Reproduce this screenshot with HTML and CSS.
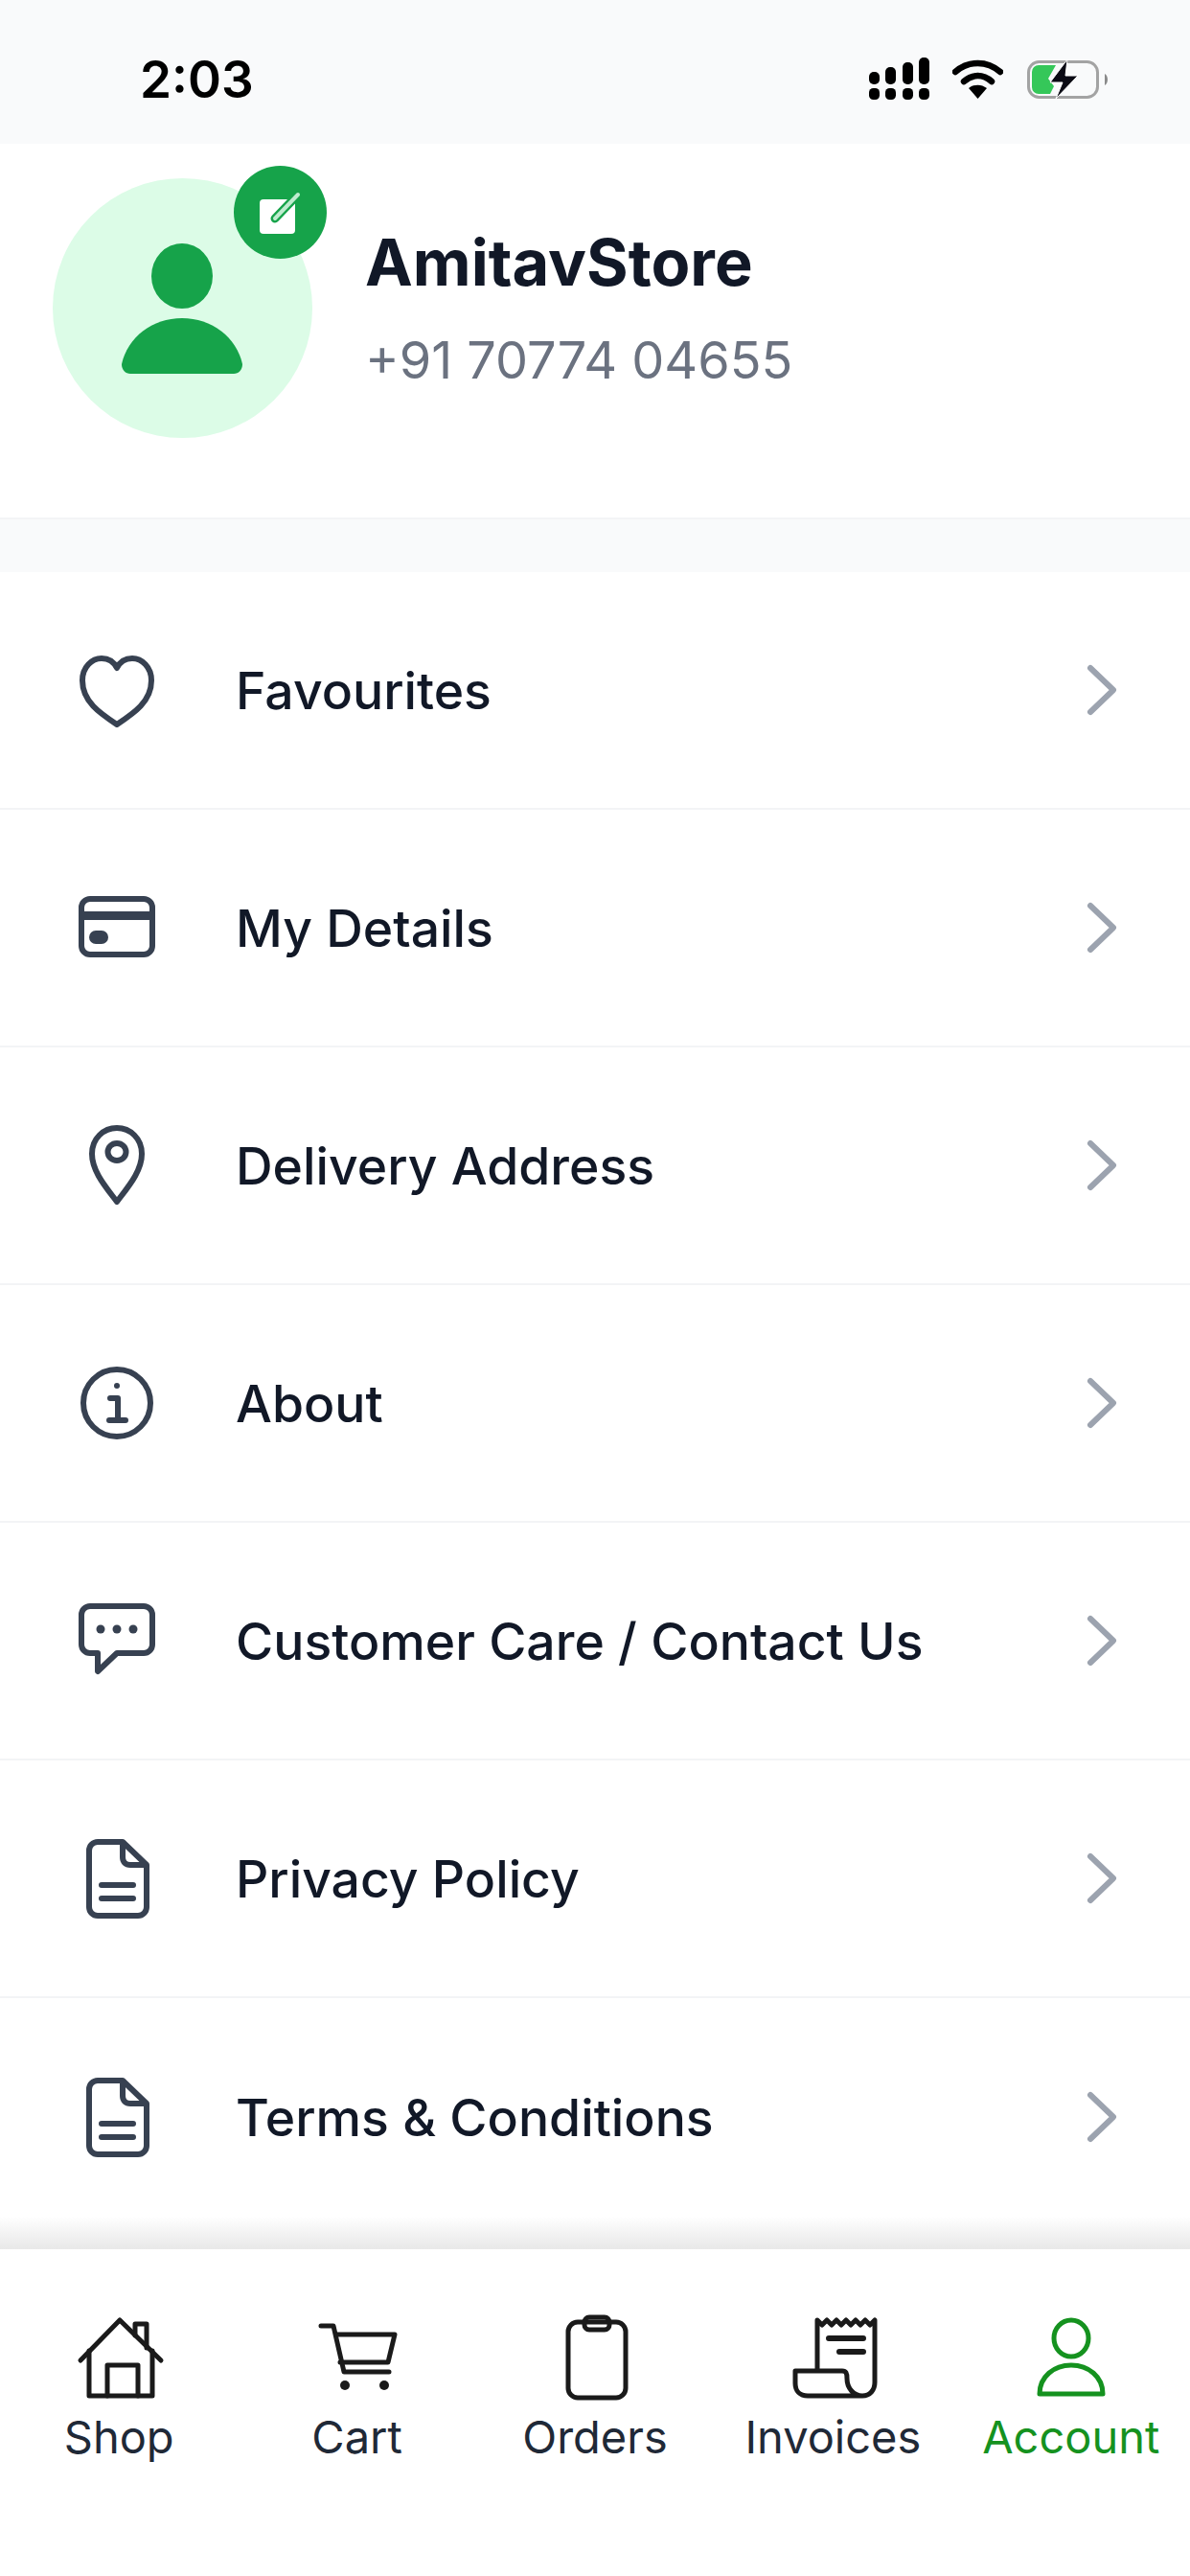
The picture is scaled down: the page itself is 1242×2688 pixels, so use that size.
FILE: index.html
```html
<!DOCTYPE html>
<html lang="en">
<head>
<meta charset="utf-8">
<title>Account</title>
<link rel="stylesheet" href="styles.css">
</head>
<body>
<div class="page">
  <header class="status">
    <span class="time">2:03</span>
    <div class="status-icons">
      <svg class="sig" width="63" height="44" viewBox="0 0 63 44" fill="#000">
        <rect x="0" y="32" width="11" height="12" rx="4.5"/><rect x="17" y="32" width="11" height="12" rx="4.5"/><rect x="35" y="32" width="11" height="12" rx="4.5"/><rect x="52" y="32" width="11" height="12" rx="4.5"/>
        <rect x="0" y="15" width="11" height="13" rx="5"/><rect x="17" y="10" width="11" height="18" rx="5"/><rect x="35" y="5" width="11" height="23" rx="5"/><rect x="52" y="0" width="11" height="28" rx="5"/>
      </svg>
      <svg class="wifi" width="53" height="41" viewBox="0 0 53 41">
        <path d="M3 13 C17 1 36 1 50 13" fill="none" stroke="#000" stroke-width="6.5" stroke-linecap="round"/>
        <path d="M12 23 C21 15 32 15 41 23" fill="none" stroke="#000" stroke-width="6.5" stroke-linecap="round"/>
        <path d="M17 30 C23 25.500 30 25.500 36 30 L26.500 41 Z" fill="#000"/>
      </svg>
      <svg class="batt" width="86" height="42" viewBox="0 0 86 42">
        <rect x="1.500" y="2.500" width="72" height="37" rx="11" fill="none" stroke="#a3a3a3" stroke-width="3"/>
        <path d="M5 13 a7 7 0 0 1 7 -7 H30 L22 20 L28 28 L24 36 H12 a7 7 0 0 1 -7 -7 Z" fill="#35c759"/>
        <path d="M42 0 L24 24 H37 L30 41 L53 17 H40 Z" fill="#0a0a14" stroke="#fff" stroke-width="1"/>
        <path d="M81 15 C85 17 85 25 81 27 Z" fill="#8a8a8a"/>
      </svg>
    </div>
  </header>

  <section class="profile">
    <div class="avatar">
      <svg class="avatar-person" width="126" height="136" viewBox="0 0 126 136" fill="#16a34a">
        <ellipse cx="63" cy="34" rx="32" ry="34"/>
        <path d="M0 126 C6 98 32 78 63 78 C94 78 120 98 126 126 C126 132 122 136 117 136 H9 C4 136 0 132 0 126 Z"/>
      </svg>
      <div class="badge">
        <svg width="44" height="44" viewBox="0 0 44 44">
          <rect x="0" y="8" width="37" height="36" rx="4" fill="#fff"/>
          <path d="M16 28 L40 3" stroke="#16a34a" stroke-width="9" stroke-linecap="round"/>
          <path d="M16 28 L40 3" stroke="#bfeccf" stroke-width="4" stroke-linecap="round"/>
        </svg>
      </div>
    </div>
    <div class="info">
      <h1 class="name">AmitavStore</h1>
      <p class="phone">+91 70774 04655</p>
    </div>
  </section>

  <div class="spacer"></div>

  <main class="menu">
    <a class="row">
      <svg class="ico" viewBox="0 0 96 96"><path d="M48 84 C30 72 12 60 12 38 C12 24 22 15 32 15 C40 15 45 19 48 25 C51 19 56 15 64 15 C74 15 84 24 84 38 C84 60 66 72 48 84 Z"/></svg>
      <span class="label">Favourites</span>
      <svg class="chev" viewBox="0 0 36 56"><path d="M6 5 L30 28 L6 51"/></svg>
    </a>
    <a class="row">
      <svg class="ico" viewBox="0 0 96 96"><rect x="11" y="18" width="74" height="58" rx="9"/><path class="band" d="M11 35.500 H85"/><rect x="19" y="51" width="20" height="14" rx="7" class="solid"/></svg>
      <span class="label">My Details</span>
      <svg class="chev" viewBox="0 0 36 56"><path d="M6 5 L30 28 L6 51"/></svg>
    </a>
    <a class="row">
      <svg class="ico" viewBox="0 0 96 96"><path d="M48 86 C36 70 22 54 22 36 C22 20 34 9 48 9 C62 9 74 20 74 36 C74 54 60 70 48 86 Z"/><ellipse cx="48" cy="34" rx="9.500" ry="9"/></svg>
      <span class="label">Delivery Address</span>
      <svg class="chev" viewBox="0 0 36 56"><path d="M6 5 L30 28 L6 51"/></svg>
    </a>
    <a class="row">
      <svg class="ico" viewBox="0 0 96 96"><circle cx="48" cy="48" r="35"/><path d="M41 43 H49 V66 M40 66 H57"/><circle cx="48" cy="30" r="3" class="solid"/></svg>
      <span class="label">About</span>
      <svg class="chev" viewBox="0 0 36 56"><path d="M6 5 L30 28 L6 51"/></svg>
    </a>
    <a class="row">
      <svg class="ico" viewBox="0 0 96 96"><path d="M20 12 H76 C81 12 85 16 85 21 V52 C85 57 81 61 76 61 H48 L28 80 V61 H20 C15 61 11 57 11 52 V21 C11 16 15 12 20 12 Z"/><circle cx="31" cy="36" r="4.500" class="solid"/><circle cx="48" cy="36" r="4.500" class="solid"/><circle cx="65" cy="36" r="4.500" class="solid"/></svg>
      <span class="label">Customer Care / Contact Us</span>
      <svg class="chev" viewBox="0 0 36 56"><path d="M6 5 L30 28 L6 51"/></svg>
    </a>
    <a class="row">
      <svg class="ico" viewBox="0 0 96 96"><path d="M28 10 H54 L79 34 V78 C79 83 75 87 70 87 H28 C23 87 19 83 19 78 V19 C19 14 23 10 28 10 Z"/><path d="M54 11 V26 C54 31 57 34 62 34 H78"/><path d="M32 55 H65 M32 69 H65"/></svg>
      <span class="label">Privacy Policy</span>
      <svg class="chev" viewBox="0 0 36 56"><path d="M6 5 L30 28 L6 51"/></svg>
    </a>
    <a class="row">
      <svg class="ico" viewBox="0 0 96 96"><path d="M28 10 H54 L79 34 V78 C79 83 75 87 70 87 H28 C23 87 19 83 19 78 V19 C19 14 23 10 28 10 Z"/><path d="M54 11 V26 C54 31 57 34 62 34 H78"/><path d="M32 55 H65 M32 69 H65"/></svg>
      <span class="label">Terms &amp; Conditions</span>
      <svg class="chev" viewBox="0 0 36 56"><path d="M6 5 L30 28 L6 51"/></svg>
    </a>
  </main>

  <nav class="tabs">
    <a class="tab">
      <svg class="tab-ico" viewBox="0 0 96 96"><path d="M8 51 L49 9 L92 51"/><path d="M65 25 V13 H77 V38"/><path d="M17 41 V88 H83 V41"/><path d="M36 88 V56 H68 V88"/></svg>
      <span>Shop</span>
    </a>
    <a class="tab">
      <svg class="tab-ico" viewBox="0 0 96 96"><path d="M10 15 H23 L34 63 H81"/><path d="M26 24 H87 L80 53 H30"/><circle cx="35" cy="77" r="5" class="fill"/><circle cx="76" cy="77" r="5" class="fill"/></svg>
      <span>Cart</span>
    </a>
    <a class="tab">
      <svg class="tab-ico" viewBox="0 0 96 96"><rect x="20" y="11" width="60" height="79" rx="10"/><rect x="37" y="6" width="26" height="13" rx="5"/></svg>
      <span>Orders</span>
    </a>
    <a class="tab">
      <svg class="tab-ico" viewBox="0 0 96 96"><path d="M32 61 V9 L37 14 L42 9 L47 14 L52 9 L57 14 L62 9 L67 14 L72 9 L77 14 L82 9 L87 14 L92 9 V74 C92 82 87 88 79 88 H22 C14 88 9 83 9 75 V62 H58 C62 62 63 64 63 70 C63 80 70 88 79 88"/><path d="M44 28 H80 M55 42 H80" stroke-width="6"/></svg>
      <span>Invoices</span>
    </a>
    <a class="tab active">
      <svg class="tab-ico" viewBox="0 0 96 96"><ellipse cx="48" cy="28" rx="18" ry="19"/><path d="M15 86 C15 68 30 56 48 56 C66 56 81 68 81 86 Z"/></svg>
      <span>Account</span>
    </a>
  </nav>
</div>
</body>
</html>
```

FILE: styles.css
```css
* { box-sizing: border-box; }
html, body { margin: 0; padding: 0; background: #fff; }
.page {
  width: 1242px;
  height: 2688px;
  display: flex;
  flex-direction: column;
  overflow: hidden;
  font-family: Inter, "Liberation Sans", sans-serif;
  color: #111827;
}

/* status bar */
.status {
  height: 150px;
  flex: none;
  background: #f9fafb;
  display: flex;
  justify-content: space-between;
  align-items: flex-start;
  padding: 50px 84px 0 146px;
}
.time { font-size: 53px; line-height: 66px; font-weight: 600; color: #000; }
.status-icons { display: flex; align-items: flex-start; padding-top: 10px; }
.sig { margin-right: 24px; }
.wifi { margin-top: 2px; margin-right: 25px; }
.batt { margin-top: 2px; }

/* profile */
.profile {
  height: 392px;
  flex: none;
  background: #fff;
  display: flex;
  align-items: flex-start;
  padding: 36px 0 0 55px;
  border-bottom: 2px solid #f3f4f6;
}
.avatar {
  position: relative;
  width: 271px;
  height: 271px;
  border-radius: 50%;
  background: #dcfce7;
  display: flex;
  align-items: center;
  justify-content: center;
}
.avatar-person { margin-left: -2px; }
.badge {
  position: absolute;
  left: 189px;
  top: -13px;
  width: 97px;
  height: 97px;
  border-radius: 50%;
  background: #16a34a;
  display: flex;
  align-items: center;
  justify-content: center;
}
.info { margin-left: 55px; padding-top: 48px; }
.name { margin: 0; font-size: 66.7px; line-height: 80px; font-weight: 700; color: #111827; }
.phone { margin: 30px 0 0; font-size: 54px; line-height: 64px; font-weight: 400; color: #6b7280; }

.spacer { height: 55px; flex: none; background: #f9fafb; }

/* menu */
.menu { flex: 1; background: #fff; display: flex; flex-direction: column; }
.row {
  height: 248px;
  flex: none;
  display: flex;
  align-items: center;
  padding: 0 74px;
  border-bottom: 2px solid #f3f4f6;
}
.row:last-child { border-bottom: 0; }
.ico {
  width: 96px;
  height: 96px;
  flex: none;
  fill: none;
  stroke: #374151;
  stroke-width: 6;
  stroke-linejoin: round;
  stroke-linecap: round;
}
.ico .solid { fill: #374151; stroke: none; }
.ico .band { stroke-width: 9; stroke-linecap: butt; }
.label { margin-left: 76px; margin-top: 2px; flex: 1; font-size: 53.5px; line-height: 64px; font-weight: 500; color: #111827; }
.chev {
  width: 36px;
  height: 56px;
  flex: none;
  fill: none;
  stroke: #9ca3af;
  stroke-width: 6;
  stroke-linecap: round;
  stroke-linejoin: round;
}

/* tabs */
.tabs {
  height: 341px;
  flex: none;
  background: #fff;
  display: grid;
  grid-template-columns: repeat(5, 1fr);
  padding-top: 65px;
  position: relative;
}
.tabs::before {
  content: "";
  position: absolute;
  left: 0;
  right: 0;
  top: -34px;
  height: 34px;
  background: linear-gradient(to bottom, rgba(235, 235, 235, 0), #f3f3f3 50%, #e8e8e8);
}
.tab {
  display: flex;
  flex-direction: column;
  align-items: center;
  font-size: 47px;
  line-height: 54px;
  font-weight: 400;
  color: #1f2937;
}
.tab-ico {
  width: 96px;
  height: 96px;
  fill: none;
  stroke: #1a1a1a;
  stroke-width: 5;
  stroke-linejoin: round;
  stroke-linecap: round;
  margin-bottom: 8px;
}
.tab-ico .fill { fill: #1a1a1a; stroke: none; }
.tab.active { color: #15921f; }
.tab.active .tab-ico { stroke: #15921f; }
```
